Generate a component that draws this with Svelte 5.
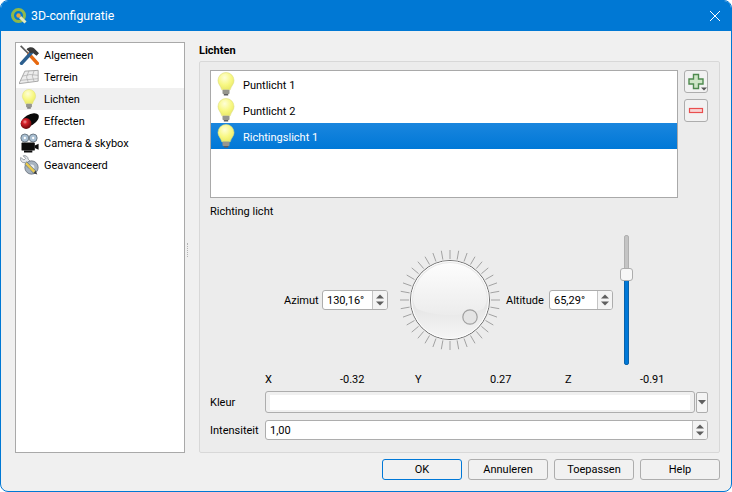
<script lang="ts">
  const nav = [
    { label: "Algemeen", icon: "tools" },
    { label: "Terrein", icon: "terrain" },
    { label: "Lichten", icon: "bulb", active: true },
    { label: "Effecten", icon: "effects" },
    { label: "Camera & skybox", icon: "camera" },
    { label: "Geavanceerd", icon: "advanced" },
  ];

  const lights = [
    { label: "Puntlicht 1" },
    { label: "Puntlicht 2" },
    { label: "Richtingslicht 1", selected: true },
  ];

  const coords = [
    ["X", "-0.32"],
    ["Y", "0.27"],
    ["Z", "-0.91"],
  ];

  const buttons = ["OK", "Annuleren", "Toepassen", "Help"];

  // dial ticks, one every 10 degrees
  const ticks = Array.from({ length: 36 }, (_, i) => {
    const a = (i * 10 * Math.PI) / 180;
    return {
      x1: 52 + Math.sin(a) * 41,
      y1: 52 - Math.cos(a) * 41,
      x2: 52 + Math.sin(a) * 50,
      y2: 52 - Math.cos(a) * 50,
    };
  });
</script>

{#snippet bulb(size = 24)}
  <svg class="bulb" width={size} height={size} viewBox="0 0 24 24">
    <path d="M12 .5a8 8 0 0 0-8 8c0 3.600 2.700 5.200 3.800 9.300h8.400c1.100-4.100 3.800-5.700 3.800-9.300a8 8 0 0 0-8-8z" fill="url(#bulbFill)" stroke="#dede80" stroke-width=".6" />
    <rect x="8.500" y="17.800" width="7" height="4.200" rx=".8" fill="#96968e" />
    <rect x="9.800" y="22" width="4.400" height="1.500" fill="#5e5e5e" />
  </svg>
{/snippet}

{#snippet spinArrows()}
  <svg width="10" height="16" viewBox="0 0 10 16">
    <path d="M1 6.500 5 2.500l4 4zM1 9.500h8l-4 4z" fill="#5f5f5f" />
  </svg>
{/snippet}

{#snippet navIcon(name: string)}
  {#if name === "bulb"}
    {@render bulb(20)}
  {:else}
    <svg width="20" height="20" viewBox="0 0 24 24">
      {#if name === "tools"}
        <path d="M2 1l11 11" stroke="#5a5a5a" stroke-width="2" />
        <path d="M12 11l10 11" stroke="#e8690f" stroke-width="4.200" stroke-linecap="round" />
        <path d="M3 22 15 9" stroke="#2c5f8f" stroke-width="4.200" stroke-linecap="round" />
        <path d="M9 5c3-3 7-3 9-1l6 6-3 3-5-4-2 1z" fill="#3a3a3a" />
      {:else if name === "terrain"}
        <path d="M7 5 23 4l0 13-23 3z" fill="#ececec" stroke="#9a9a9a" />
        <path d="M4 11l9-2 10 1M2 16l10-1 11-1M12 4.500 9 12l2 6M18 4.500 16 11l2 6" fill="none" stroke="#a8a8a8" stroke-width=".8" />
      {:else if name === "effects"}
        <ellipse cx="13" cy="11" rx="12" ry="6.500" transform="rotate(-32 13 11)" fill="#0a0a0a" />
        <circle cx="8.500" cy="15" r="6.500" fill="url(#ballFill)" />
      {:else if name === "camera"}
        <circle cx="7" cy="6" r="4.800" fill="#a9bfd2" stroke="#5d6a76" />
        <circle cx="17" cy="6" r="4.800" fill="#a9bfd2" stroke="#5d6a76" />
        <circle cx="7" cy="6" r="1.400" fill="#fff" />
        <circle cx="17" cy="6" r="1.400" fill="#fff" />
        <rect x="3" y="11.500" width="16" height="9.500" rx="1" fill="#0c0c0c" />
        <path d="M19 15l4.500-2v7L19 18zM6 21h10v2.500H6z" fill="#0c0c0c" />
      {:else}
        <path d="M2 3l4 3 2-2-3-3c3-1 6 1 6 4l10 10-4 4L7 9C4 10 1 7 2 3z" fill="#e4e7ea" stroke="#8a9096" />
        <circle cx="15" cy="15" r="8" fill="#a7b3bf" stroke="#6b747e" />
        <circle cx="15" cy="15" r="3.500" fill="#e8ecee" />
        <path d="M9 8l11 11-2.500 3L7 11z" fill="#e9c94e" stroke="#4c6a94" stroke-width=".8" />
        <path d="M17.500 22l2.500-3 2 4.500z" fill="#3b3b3b" />
      {/if}
    </svg>
  {/if}
{/snippet}

<div class="window">
  <svg class="defs" width="0" height="0">
    <defs>
      <radialGradient id="bulbFill" cx=".42" cy=".3" r=".75">
        <stop offset="0" stop-color="#fefed8" />
        <stop offset=".55" stop-color="#f8f884" />
        <stop offset="1" stop-color="#e8e864" />
      </radialGradient>
      <radialGradient id="ballFill" cx=".4" cy=".35" r=".7">
        <stop offset="0" stop-color="#f2a0a0" />
        <stop offset=".3" stop-color="#d8202a" />
        <stop offset="1" stop-color="#5c0508" />
      </radialGradient>
      <linearGradient id="dialFill" x1="0" y1="0" x2="0" y2="1">
        <stop offset="0" stop-color="#e8e8e8" />
        <stop offset=".6" stop-color="#e6e6e6" />
        <stop offset="1" stop-color="#f6f6f6" />
      </linearGradient>
      <linearGradient id="dialShine" x1="0" y1="0" x2="0" y2="1">
        <stop offset="0" stop-color="#fdfdfd" />
        <stop offset="1" stop-color="#ececec" />
      </linearGradient>
    </defs>
  </svg>

  <header class="titlebar">
    <div class="title">
      <svg width="18" height="18" viewBox="0 0 18 18">
        <circle cx="8.500" cy="8.500" r="6" fill="none" stroke="#8fb84a" stroke-width="3" />
        <path d="M10 10l5.500 5.500" stroke="#e2e8c0" stroke-width="3" />
        <circle cx="8.500" cy="8.500" r="2.200" fill="#e8a33c" />
      </svg>
      <span>3D-configuratie</span>
    </div>
    <svg class="close" width="10" height="10" viewBox="0 0 10 10">
      <path d="M0 0l10 10M10 0 0 10" stroke="#fff" stroke-width="1" />
    </svg>
  </header>

  <div class="content">
    <div class="main">
      <ul class="nav">
        {#each nav as item}
          <li class:active={item.active}>
            {@render navIcon(item.icon)}
            <span>{item.label}</span>
          </li>
        {/each}
      </ul>

      <div class="splitter"></div>

      <section class="panel">
        <h2>Lichten</h2>
        <div class="group">
          <div class="lights-row">
            <ul class="lights">
              {#each lights as light}
                <li class:selected={light.selected}>
                  {@render bulb()}
                  <span>{light.label}</span>
                </li>
              {/each}
            </ul>
            <div class="tool-buttons">
              <button class="tool">
                <svg width="24" height="23" viewBox="0 0 24 23">
                  <path d="M9.500 4.500h5v4.500h4.500v5h-4.500v4.500h-5V14H5V9h4.500z" fill="#cfe6c8" stroke="#4f8a4f" stroke-width="1.400" />
                  <path d="M17 17.500h6l-3 3z" fill="#555" />
                </svg>
              </button>
              <button class="tool">
                <svg width="24" height="23" viewBox="0 0 24 23">
                  <rect x="5.500" y="9.500" width="13" height="4" fill="#f7d5d5" stroke="#ea4f4f" stroke-width="1.200" />
                </svg>
              </button>
            </div>
          </div>

          <div class="caption">Richting licht</div>

          <div class="direction">
            <label class="az-label" for="azimut">Azimut</label>
            <div class="spin az-spin">
              <input id="azimut" value="130,16°" readonly />
              <span class="arrows">{@render spinArrows()}</span>
            </div>
            <svg class="dial" width="104" height="104" viewBox="0 0 104 104">
              {#each ticks as t}
                <line x1={t.x1} y1={t.y1} x2={t.x2} y2={t.y2} stroke="#a2a2a2" stroke-width="1" />
              {/each}
              <circle cx="52" cy="52" r="39.500" fill="url(#dialFill)" stroke="#707070" />
              <path d="M15 52a37 37 0 0 1 74 0c-1 4-2 6-4 9-10 4-22 6-33 6s-23-2-33-6c-2-3-3-5-4-9z" fill="url(#dialShine)" />
              <circle cx="52" cy="52" r="38.500" fill="none" stroke="#fff" />
              <circle cx="72" cy="69" r="7.200" fill="#e4e4e4" stroke="#a0a0a0" stroke-width="1.200" />
            </svg>
            <label class="alt-label" for="altitude">Altitude</label>
            <div class="spin alt-spin">
              <input id="altitude" value="65,29°" readonly />
              <span class="arrows">{@render spinArrows()}</span>
            </div>
            <div class="slider">
              <div class="track"></div>
              <div class="handle"></div>
              <div class="fill"></div>
            </div>
          </div>

          <div class="coords">
            {#each coords as [axis, value]}
              <span>{axis}</span>
              <span>{value}</span>
            {/each}
          </div>

          <div class="form-row color-row">
            <span class="field-label">Kleur</span>
            <div class="color-button"><div class="swatch"></div></div>
            <div class="color-menu">
              <svg width="8" height="5" viewBox="0 0 8 5"><path d="M0 0h8L4 4.500z" fill="#5f5f5f" /></svg>
            </div>
          </div>

          <div class="form-row intensity-row">
            <label class="field-label" for="intensity">Intensiteit</label>
            <div class="spin wide">
              <input id="intensity" value="1,00" readonly />
              <span class="arrows">{@render spinArrows()}</span>
            </div>
          </div>
        </div>
      </section>
    </div>

    <footer class="footer">
      {#each buttons as label, i}
        <button class="push" class:default={i === 0}>{label}</button>
      {/each}
    </footer>
  </div>
</div>

<style>
  :global(body) {
    background: #fff;
  }

  .window {
    width: 732px;
    height: 492px;
    box-sizing: border-box;
    display: flex;
    flex-direction: column;
    border: 1px solid #0078d4;
    border-radius: 8px;
    overflow: hidden;
    background: #f0f0f0;
    font: 11px/18px Roboto, "Open Sans", sans-serif;
    color: #000;
  }

  .defs {
    position: absolute;
  }

  .titlebar {
    height: 30px;
    flex: none;
    display: flex;
    align-items: center;
    justify-content: space-between;
    padding: 0 11px 0 9px;
    background: #0078d4;
    color: #fff;
  }

  .title {
    display: flex;
    align-items: center;
    gap: 3px;
    font-size: 12.300px;
  }

  .content {
    flex: 1;
    min-height: 0;
    display: flex;
    flex-direction: column;
    padding: 11px 11px 10px 14px;
  }

  .main {
    display: flex;
    height: 411px;
  }

  .nav {
    width: 170px;
    box-sizing: border-box;
    margin: 0;
    padding: 1px 0 0;
    list-style: none;
    background: #fff;
    border: 1px solid #a9a9a9;
  }

  .nav li {
    height: 22px;
    display: flex;
    align-items: center;
    gap: 5px;
    padding-left: 3px;
  }

  .nav li span,
  .az-label,
  .alt-label,
  .field-label {
    padding-top: 2px;
  }

  .nav li.active {
    background: #f0f0f0;
  }

  .splitter {
    width: 14px;
    display: flex;
    align-items: center;
  }

  .splitter::before {
    content: "";
    height: 14px;
    margin: 5px 0 0 2px;
    border-left: 1px dotted #b4b4b4;
  }

  .panel {
    flex: 1;
    min-width: 0;
    display: flex;
    flex-direction: column;
  }

  h2 {
    margin: 0;
    height: 19px;
    font-size: 11px;
    line-height: 18px;
    font-weight: 700;
  }

  .group {
    flex: 1;
    box-sizing: border-box;
    padding: 8px 11px 0 10px;
    background: #ececec;
    border: 1px solid #d8d8d8;
    border-radius: 2px;
  }

  .lights-row {
    display: flex;
    gap: 6px;
  }

  .lights {
    width: 468px;
    height: 128px;
    box-sizing: border-box;
    margin: 0;
    padding: 0;
    list-style: none;
    background: #fff;
    border: 1px solid #a9a9a9;
  }

  .lights li {
    height: 26px;
    display: flex;
    align-items: center;
    gap: 5px;
    padding-left: 3px;
    color: #000;
  }

  .lights li span {
    padding-top: 4px;
  }

  .lights li.selected {
    background: linear-gradient(#1a86de, #0078d7);
    color: #fff;
  }

  .tool-buttons {
    display: flex;
    flex-direction: column;
    gap: 6px;
  }

  .tool {
    width: 24px;
    height: 23px;
    padding: 0;
    display: block;
    background: #f2f2f2;
    border: 1px solid #adadad;
    border-radius: 3px;
  }

  .tool svg {
    display: block;
    margin: -1px;
  }

  .caption {
    margin-top: 5px;
    height: 16px;
  }

  .direction {
    margin-top: 13px;
    height: 136px;
    display: flex;
    align-items: center;
    padding-left: 74px;
  }

  .az-label {
    width: 38px;
  }

  .alt-label {
    width: 43px;
    margin-left: 4px;
  }

  .spin {
    height: 20px;
    box-sizing: border-box;
    display: flex;
    background: #fff;
    border: 1px solid #adadad;
    border-radius: 3px;
    overflow: hidden;
  }

  .spin input {
    flex: 1;
    min-width: 0;
    border: 0;
    outline: 0;
    padding: 2px 0 0 4px;
    background: transparent;
    font: inherit;
    color: #000;
  }

  .arrows {
    width: 14px;
    flex: none;
    display: flex;
    align-items: center;
    justify-content: center;
    background: #f4f4f4;
    border-left: 1px solid #c4c4c4;
  }

  .az-spin {
    width: 66px;
    margin-right: 10px;
  }

  .alt-spin {
    width: 64px;
  }

  .dial {
    flex: none;
    display: block;
  }

  .slider {
    position: relative;
    width: 13px;
    height: 130px;
    margin-left: 7px;
  }

  .track,
  .fill {
    position: absolute;
    left: 4px;
    width: 5px;
    box-sizing: border-box;
    border-radius: 2px;
  }

  .track {
    top: 0;
    height: 36px;
    background: #c4c4c4;
    border: 1px solid #b0b0b0;
  }

  .fill {
    top: 44px;
    bottom: 0;
    background: #0078d7;
    border: 1px solid #0a62aa;
  }

  .handle {
    position: absolute;
    z-index: 1;
    top: 33px;
    left: 0;
    width: 13px;
    height: 13px;
    box-sizing: border-box;
    background: #f7f7f7;
    border: 1px solid #adadad;
    border-radius: 3px;
  }

  .coords {
    margin-top: 3px;
    height: 16px;
    padding-left: 55px;
    display: grid;
    grid-template-columns: repeat(6, 75px);
  }

  .form-row {
    display: flex;
    align-items: center;
  }

  .field-label {
    width: 55px;
    flex: none;
  }

  .color-row {
    margin-top: 4px;
    height: 22px;
  }

  .color-button {
    width: 431px;
    height: 22px;
    box-sizing: border-box;
    padding: 3px 4px 2px;
    background: #f0f0f0;
    border: 1px solid #adadad;
    border-radius: 3px;
  }

  .swatch {
    height: 100%;
    background: #fff;
  }

  .color-menu {
    width: 12px;
    height: 21px;
    box-sizing: border-box;
    margin-left: 1px;
    display: flex;
    align-items: center;
    justify-content: center;
    background: #f4f4f4;
    border: 1px solid #adadad;
    border-radius: 2px;
  }

  .intensity-row {
    margin-top: 7px;
    height: 20px;
  }

  .wide {
    width: 443px;
  }

  .footer {
    flex: none;
    display: flex;
    justify-content: flex-end;
    gap: 6px;
    margin-top: 6px;
  }

  .push {
    width: 80px;
    height: 21px;
    padding: 1px 0 0;
    background: #f1f1f1;
    border: 1px solid #adadad;
    border-radius: 3px;
    font: inherit;
    color: #000;
  }

  .push.default {
    border-color: #0078d7;
  }
</style>
